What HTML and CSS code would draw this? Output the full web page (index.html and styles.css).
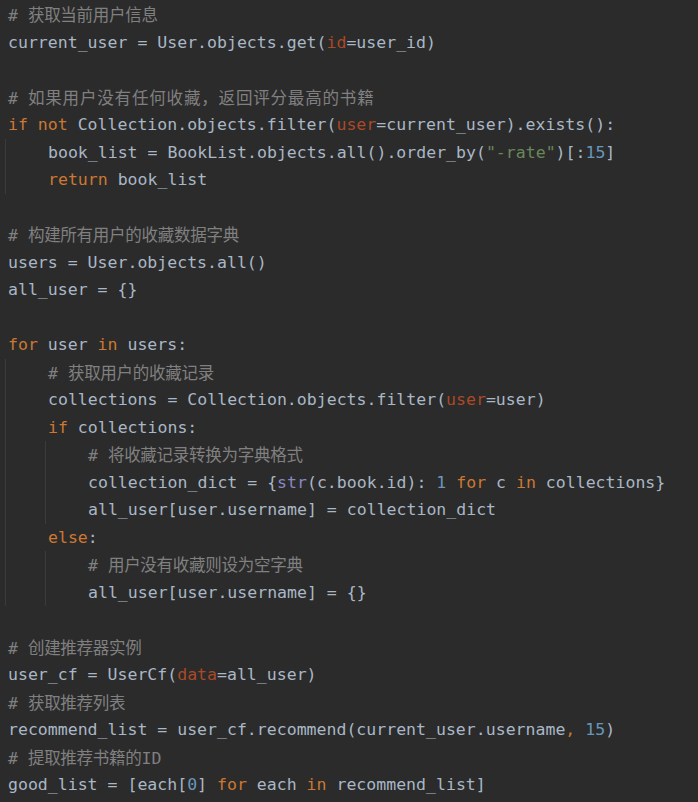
FILE: index.html
```html
<!DOCTYPE html>
<html lang="zh">
<head>
<meta charset="utf-8">
<link rel="stylesheet" href="styles.css">
</head>
<body>
<div class="editor">
<div class="ln"><span class="c"># <span class="cjk">获取当前用户信息</span></span></div>
<div class="ln">current_user = User.objects.get(<span class="p">id</span>=user_id)</div>
<div class="ln"> </div>
<div class="ln"><span class="c"># <span class="cjk wide">如果用户没有任何收藏，返回评分最高的书籍</span></span></div>
<div class="ln"><span class="k">if not</span> Collection.objects.filter(<span class="p">user</span>=current_user).exists():</div>
<div class="blk">
<div class="ln">book_list = BookList.objects.all().order_by(<span class="s">"-rate"</span>)[:<span class="n">15</span>]</div>
<div class="ln"><span class="k">return</span> book_list</div>
</div>
<div class="ln"> </div>
<div class="ln"><span class="c"># <span class="cjk">构建所有用户的收藏数据字典</span></span></div>
<div class="ln">users = User.objects.all()</div>
<div class="ln">all_user = {}</div>
<div class="ln"> </div>
<div class="ln"><span class="k">for</span> user <span class="k">in</span> users:</div>
<div class="blk">
<div class="ln"><span class="c"># <span class="cjk">获取用户的收藏记录</span></span></div>
<div class="ln">collections = Collection.objects.filter(<span class="p">user</span>=user)</div>
<div class="ln"><span class="k">if</span> collections:</div>
<div class="blk">
<div class="ln"><span class="c"># <span class="cjk">将收藏记录转换为字典格式</span></span></div>
<div class="ln">collection_dict = {<span class="b">str</span>(c.book.id): <span class="n">1</span> <span class="k">for</span> c <span class="k">in</span> collections}</div>
<div class="ln">all_user[user.username] = collection_dict</div>
</div>
<div class="ln"><span class="k">else</span>:</div>
<div class="blk">
<div class="ln"><span class="c"># <span class="cjk">用户没有收藏则设为空字典</span></span></div>
<div class="ln">all_user[user.username] = {}</div>
</div>
</div>
<div class="ln"> </div>
<div class="ln"><span class="c"># <span class="cjk">创建推荐器实例</span></span></div>
<div class="ln">user_cf = UserCf(<span class="p">data</span>=all_user)</div>
<div class="ln"><span class="c"># <span class="cjk">获取推荐列表</span></span></div>
<div class="ln">recommend_list = user_cf.recommend(current_user.username<span class="k">,</span> <span class="n">15</span>)</div>
<div class="ln"><span class="c"># <span class="cjk">提取推荐书籍的</span>ID</span></div>
<div class="ln">good_list = [each[<span class="n">0</span>] <span class="k">for</span> each <span class="k">in</span> recommend_list]</div>
</div>
</body>
</html>
```
FILE: styles.css
```css
html, body {
  margin: 0;
  padding: 0;
  background: #2b2b2b;
}
.editor {
  padding: 1px 0 0 8px;
  font-family: "DejaVu Sans Mono", "Liberation Mono", "Noto Sans CJK SC", monospace;
  font-size: 16.55px;
  color: #a9b7c6;
}
.ln {
  height: 27.5px;
  line-height: 27.5px;
  white-space: pre;
}
.blk {
  margin-left: -3px;
  border-left: 1px solid #3b3b3b;
  padding-left: 42px;
}
.c { color: #808080; }
.cjk {
  font-family: "Noto Sans CJK SC", sans-serif;
  letter-spacing: -0.3px;
}
.cjk.wide {
  letter-spacing: 0.8px;
}
.k { color: #cc7832; }
.p { color: #aa4926; }
.s { color: #6a8759; }
.n { color: #6897bb; }
.b { color: #8888c6; }
```
